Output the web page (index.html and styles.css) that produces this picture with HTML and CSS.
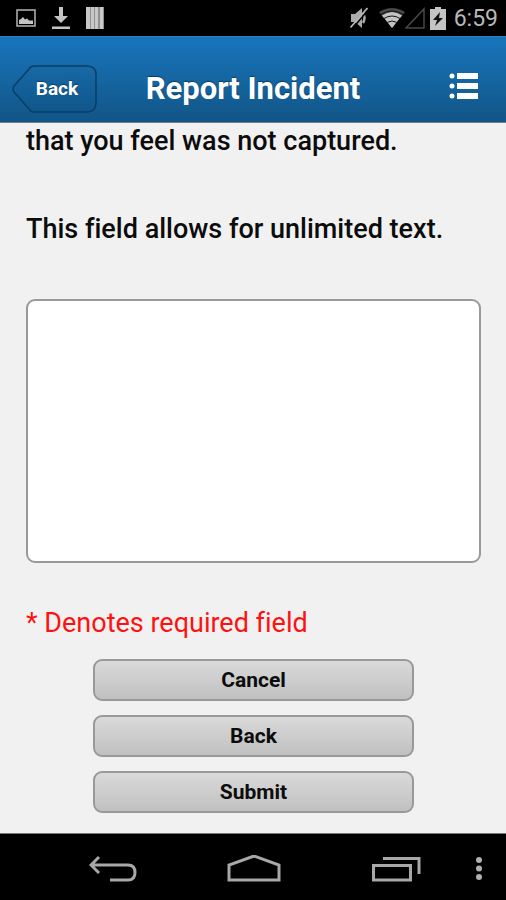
FILE: index.html
```html
<!DOCTYPE html>
<html lang="en">
<head>
<meta charset="utf-8">
<meta name="viewport" content="width=device-width, initial-scale=1">
<title>Report Incident</title>
<link rel="stylesheet" href="styles.css">
</head>
<body>
<div class="status">
  <div class="status-left">
    <svg width="20" height="20" viewBox="0 0 20 20" aria-hidden="true"><rect x="1" y="2" width="18" height="16" fill="none" stroke="#aaa" stroke-width="1.600"/><path d="M3 16v-4l2-1 2-2 2 2.500 2-1 2 2 4 0v3.500z" fill="#c4c4c4"/></svg>
    <svg width="18" height="24" viewBox="0 0 18 24" aria-hidden="true"><path d="M7 1h4v9h5l-7 7-7-7h5zM0 20.500h18v2.500H0z" fill="#c4c4c4"/></svg>
    <svg width="18" height="22" viewBox="0 0 18 22" aria-hidden="true"><path d="M0 0h18v22H0z" fill="#909090"/><path d="M0 0h4v22H0zM5 0h3v22H5zM9 0h3v22H9zM14 0h3v22h-3z" fill="#c8c8c8"/></svg>
  </div>
  <div class="status-right">
    <svg class="mute" width="20" height="22" viewBox="0 0 20 22" aria-hidden="true"><path d="M2 7h4l7-6v20l-7-6H2z" fill="#aaa"/><path d="M14 6q3 5 0 10" fill="none" stroke="#aaa" stroke-width="2.500"/><path d="M3.500 21.500 20 2" stroke="#000" stroke-width="1.500"/><path d="M1.500 20.500 18.500 1" stroke="#b4b4b4" stroke-width="1.800"/></svg>
    <svg width="26" height="20" viewBox="0 0 26 20" aria-hidden="true"><path d="M0 4Q13-4 26 4L13 20z" fill="#484848"/><path d="M3 7.500q10-7 20 0L13 20z" fill="#c4c4c4"/><path d="M2 6.500q11-7 22 0M5 10.500q8-5 16 0M8 14.500q5-3 10 0" fill="none" stroke="#111" stroke-width="1"/></svg>
    <svg width="20" height="22" viewBox="0 0 20 22" aria-hidden="true"><path d="M1 21 19 2v19z" fill="none" stroke="#484848" stroke-width="1.500"/></svg>
    <svg class="battery" width="16" height="23" viewBox="0 0 16 23" aria-hidden="true"><path d="M5 0h6v2h5v21H0V2h5z" fill="#c4c4c4"/><path d="M10 5 3 13h4l-2 6 8-8H9z" fill="#111"/></svg>
    <span class="clock">6:59</span>
  </div>
</div>
<header class="header">
  <button class="back" type="button">
    <svg class="back-shape" width="86" height="48" viewBox="0 0 86 48" aria-hidden="true">
      <defs><linearGradient id="backFill" x1="0" y1="0" x2="0" y2="1"><stop offset="0" stop-color="#1769a6"/><stop offset="1" stop-color="#10568b"/></linearGradient></defs>
      <path d="M22 1h54q8 1 8 8v29q0 8-8 9H22q-3 0-5-3L2 27q-2-3 0-6L17 4q2-3 5-3z" fill="url(#backFill)" stroke="#0b3e65" stroke-width="1.500" stroke-linejoin="round"/>
    </svg>
    <span class="back-label">Back</span>
  </button>
  <h1 class="title">Report Incident</h1>
  <button class="menu" type="button" aria-label="Menu">
    <svg width="30" height="28" viewBox="0 0 30 28" aria-hidden="true"><g fill="#fff"><circle cx="3" cy="4" r="2.500"/><circle cx="3" cy="14" r="2.500"/><circle cx="3" cy="24" r="2.500"/><path d="M8 1h21v6H8zM8 11h21v6H8zM8 21h21v6H8z"/></g></svg>
  </button>
</header>
<main class="content">
  <label class="prompt" for="details"><span>that you feel was not captured.</span><span>This field allows for unlimited text.</span></label>
  <textarea id="details" class="details"></textarea>
  <p class="required">* Denotes required field</p>
  <div class="actions">
    <button class="action" type="button">Cancel</button>
    <button class="action" type="button">Back</button>
    <button class="action" type="submit">Submit</button>
  </div>
</main>
<nav class="navbar">
  <div class="nav-main">
    <button class="nav" type="button" aria-label="Back"><svg width="48" height="28" viewBox="0 0 48 28" fill="none" stroke="#a8a8a8" stroke-width="3" aria-hidden="true"><path d="M10 2 2 10l8 8M2 10h37q7 0 7 7.500T39 25H21"/></svg></button>
    <button class="nav" type="button" aria-label="Home"><svg width="54" height="28" viewBox="0 0 54 28" fill="none" stroke="#a8a8a8" stroke-width="3" aria-hidden="true"><path d="M2 25V10L27 1l25 9v15z"/></svg></button>
    <button class="nav" type="button" aria-label="Recent apps"><svg width="50" height="28" viewBox="0 0 50 28" fill="none" stroke="#a8a8a8" stroke-width="3" aria-hidden="true"><path d="M2.500 10.500h37V25h-37zM12 3.500h36V19"/></svg></button>
  </div>
  <button class="nav" type="button" aria-label="More options"><svg width="8" height="26" viewBox="0 0 8 26" fill="#b0b0b0" aria-hidden="true"><circle cx="4" cy="4" r="3"/><circle cx="4" cy="12.500" r="3"/><circle cx="4" cy="21" r="3"/></svg></button>
</nav>
</body>
</html>
```
FILE: styles.css
```css
* { box-sizing: border-box; }
body {
  margin: 0;
  min-height: 100vh;
  display: flex;
  flex-direction: column;
  background: #f1f1f1;
  color: #0c0c0c;
  font-family: Roboto, "Liberation Sans", sans-serif;
  font-variant-ligatures: none;
}
button { font-family: inherit; cursor: pointer; }
svg { display: block; }
.status {
  height: 36px;
  padding: 0 8px 0 16px;
  display: flex;
  justify-content: space-between;
  align-items: center;
  background: #000;
}
.status-left { display: flex; align-items: center; gap: 16px; }
.status-right { display: flex; align-items: center; }
.mute { margin-right: 10px; }
.battery { margin: 0 8px 0 5px; }
.clock { padding-top: 2px; color: #b8b8b8; font-size: 23px; line-height: 34px; }
.header {
  height: 87px;
  padding: 18px 12px 0;
  display: grid;
  grid-template-columns: 86px 1fr 86px;
  align-items: center;
  background: linear-gradient(#1876bc, #125587);
  border-top: 1px solid #2b82c0;
  border-bottom: 1px solid #6f7f8a;
}
.back, .menu, .nav { padding: 0; border: 0; background: none; }
.back { display: grid; place-items: center; }
.menu { justify-self: end; margin-right: 15px; padding-bottom: 6px; }
.back-shape, .back-label { grid-area: 1 / 1; }
.back-label {
  padding-left: 4px;
  color: #fff;
  font-size: 19px;
  font-weight: 700;
  line-height: 24px;
  text-shadow: 0 -1px 1px #0b3e65;
}
.title {
  margin: 0;
  text-align: center;
  color: #fff;
  font-size: 31px;
  font-weight: 700;
  line-height: 40px;
  text-shadow: 0 -1px 1px #0b3e65;
}
.content { flex: 1; padding: 0 25px 20px 26px; }
.prompt {
  display: grid;
  gap: 52px;
  font-size: 27px;
  font-weight: 500;
  line-height: 36px;
}
.details {
  display: block;
  width: 100%;
  height: 264px;
  margin: 52px 0 44px;
  padding: 12px;
  border: 2px solid #999;
  border-radius: 9px;
  background: #fff;
  font: inherit;
  font-size: 27px;
  resize: none;
}
.required {
  margin: 0 0 20px;
  color: #f11;
  font-size: 27px;
  line-height: 32px;
}
.actions { display: grid; gap: 14px; padding: 0 67px; }
.action {
  height: 42px;
  padding: 0;
  border: 2px solid #999;
  border-radius: 9px;
  background: linear-gradient(#dadada, #c0c0c0);
  color: #0c0c0c;
  font-size: 21px;
  font-weight: 700;
}
.navbar {
  height: 67px;
  padding: 4px 23px 0 89px;
  display: flex;
  gap: 54px;
  align-items: center;
  border-top: 1px solid #777;
  background: #000;
}
.nav-main { flex: 1; display: flex; justify-content: space-between; }
```
